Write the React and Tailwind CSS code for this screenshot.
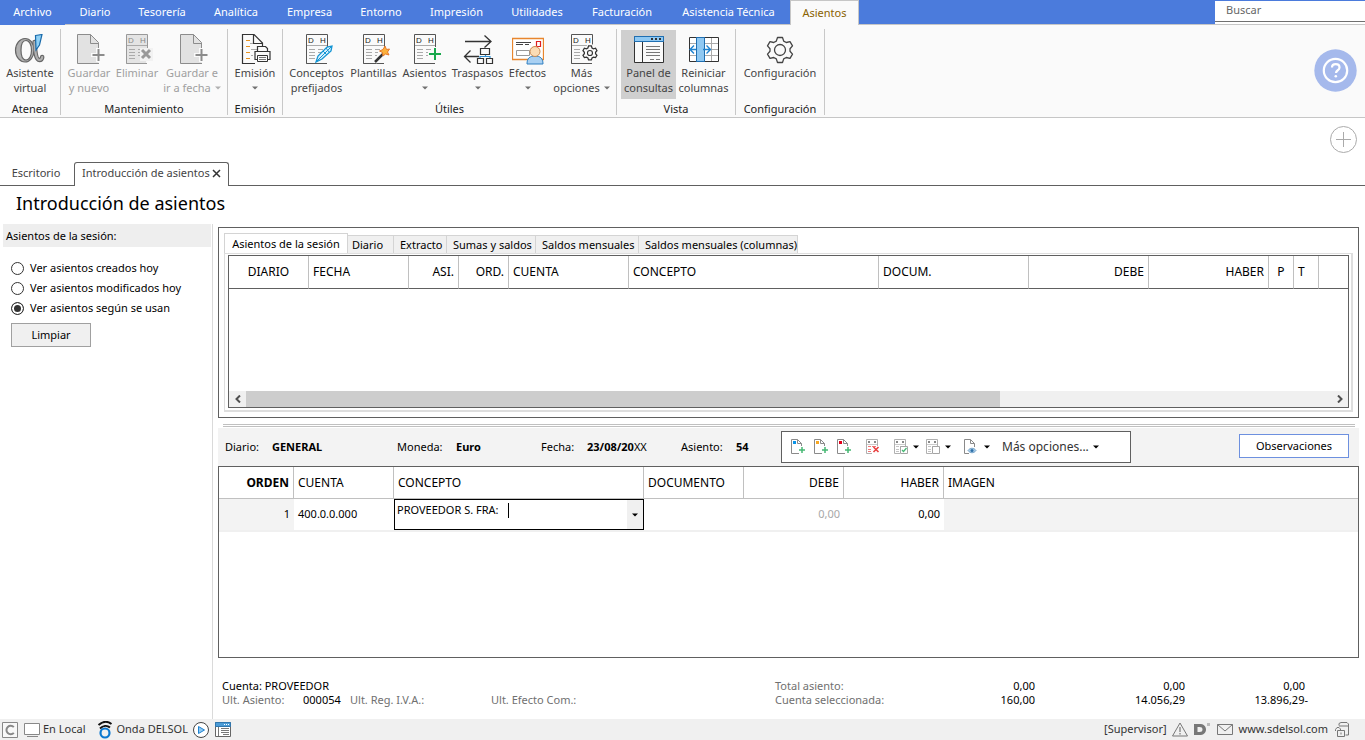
import React from "react";

const MENU = [
  ["Archivo", "w-[65px]"],
  ["Diario", "w-[60px]"],
  ["Tesorería", "w-[74px]"],
  ["Analítica", "w-[74px]"],
  ["Empresa", "w-[73px]"],
  ["Entorno", "w-[70px]"],
  ["Impresión", "w-[81px]"],
  ["Utilidades", "w-[80px]"],
  ["Facturación", "w-[90px]"],
  ["Asistencia Técnica", "w-[123px]"],
];

function Caret({ className = "text-[#707070]" }) {
  return (
    <svg width="6" height="4" viewBox="0 0 6 4" className={`inline-block shrink-0 ${className}`} aria-hidden="true">
      <path d="M0 0.5h6L3 3.5z" fill="currentColor" />
    </svg>
  );
}

function Svg({ w = 32, h = 32, children }) {
  return (
    <svg width={w} height={h} viewBox={`0 0 ${w} ${h}`} fill="none" className="shrink-0" aria-hidden="true">
      {children}
    </svg>
  );
}

/* Ledger page with the D / H column heads, shared by several ribbon icons */
function Ledger({ stroke = "#555", fill = "none", ink = "#222" }) {
  return (
    <>
      <path d="M26.5 14V0.5H5.500V29.500H25" fill={fill} stroke={stroke} />
      <path d="M26 29.500H5.500" stroke={stroke} />
      <text x="7" y="9" fontSize="8" fill={ink} className="font-['Liberation_Sans',sans-serif]">D</text>
      <text x="19" y="9" fontSize="8" fill={ink} className="font-['Liberation_Sans',sans-serif]">H</text>
      <path d="M6 11.500h20" stroke="#aaa" />
      <path d="M8 15.500h6M8 18.500h6M8 21.500h6M8 24.500h6M17 15.500h5M17 18.500h3M17 21.500h2" stroke="#aaa" />
    </>
  );
}

function AlphaIcon() {
  return (
    <Svg>
      <path d="M20.500 8C21 15 21.500 26 25.500 26C27 26 28 25 28.200 23" stroke="#666" strokeWidth="4.500" strokeLinecap="round" />
      <path
        fillRule="evenodd"
        d="M11 4.500C16 4.500 20 9 20 16S16 28 11 28S1.500 23 1.500 16.200S6 4.500 11 4.500zM12 6.500C8.500 6.500 7 10.500 7 16.200S8.500 26 12 26S17.500 21.500 17.500 16.200S15.500 6.500 12 6.500z"
        fill="#b0b0b0"
        stroke="#666"
        strokeWidth="1.200"
      />
      <path d="M20.500 8C21 15 21.500 26 25.500 26C27 26 28 25 28.200 23" stroke="#b0b0b0" strokeWidth="2.200" strokeLinecap="round" />
      <path d="M21.500 1.500l6.500-1L25.500 11l-3.500 5z" fill="#8fd0f5" stroke="#1a6bab" strokeWidth="1.200" />
    </Svg>
  );
}

function SavePlusIcon() {
  return (
    <Svg>
      <path d="M4.500 0.500H17.500L25.500 8.500V29.500H4.500z" fill="#e2e2e2" />
      <path d="M25.500 16V8.500L17.500 0.500H4.500V29.500H26M17.500 0.500V9.500H25.500" stroke="#8c8c8c" />
      <path d="M25 14v14M18 21h14" stroke="#fafafa" strokeWidth="4" />
      <path d="M25.500 15v12M19.500 21h12" stroke="#8c8c8c" strokeWidth="2" />
    </Svg>
  );
}

function DeleteIcon() {
  return (
    <Svg>
      <Ledger stroke="#999" fill="#e4e4e4" ink="#888" />
      <path d="M19 14h14v13H19z" fill="#f2f2f2" />
      <path d="M21 16l8 8M29 16l-8 8" stroke="#999" strokeWidth="3" />
    </Svg>
  );
}

function PrintIcon() {
  return (
    <Svg>
      <path d="M23.500 12V9L15 0.500H3.500V29.500H16M14.500 0.500V9.500H23.500" stroke="#333" strokeWidth="1.200" />
      <path d="M7 6.500h4M7 12.500h4M7 18.500h4M7 24.500h4" stroke="#e8921f" />
      <path d="M11 9.500h3M12 15.500h8M12 21.500h2" stroke="#aaa" />
      <path d="M18.500 17.500v-5h8l2 2v3" fill="#fafafa" stroke="#333" strokeWidth="1.200" />
      <path d="M16 17.500h15v8H16z" fill="#fafafa" stroke="#333" strokeWidth="1.200" />
      <path d="M18.500 21.500h10v6h-10z" fill="#fafafa" stroke="#333" />
      <path d="M20 23.500h7M20 25.500h7" stroke="#777" />
    </Svg>
  );
}

function PenIcon() {
  return (
    <Svg>
      <Ledger />
      <path d="M15 28l2-6 9-9 5-1-1 5-9 8z" fill="#d9f1fd" stroke="#1495d4" strokeWidth="1.300" />
      <path d="M15 28l10-10 5-5M22 17l4 4M25 14l3 4" stroke="#1495d4" />
    </Svg>
  );
}

function WandIcon() {
  return (
    <Svg>
      <Ledger />
      <path d="M17 28L27 18" stroke="#fafafa" strokeWidth="4" />
      <path d="M17 28L26 19" stroke="#333" strokeWidth="2.500" />
      <path d="M27 12l1.500 3.500 3-.5-2 3 1.500 3-3.500-1-2.500 2-.5-3.500-3-1.500 3.500-1.500z" fill="#fbb13c" stroke="#e8792a" />
    </Svg>
  );
}

function AddEntryIcon() {
  return (
    <Svg>
      <Ledger />
      <path d="M26 13v14M19 20h14" stroke="#fafafa" strokeWidth="4" />
      <path d="M26 14v12M20 20h12" stroke="#18a84c" strokeWidth="2" />
    </Svg>
  );
}

function TransferIcon() {
  return (
    <Svg>
      <path d="M3 7.500H29M22.500 1.500l6.500 6-6.500 6M17 22.500H2.500M8.500 16.500l-6 6 6 6" stroke="#333" strokeWidth="1.300" />
      <path d="M18.500 14.500h9v6h-9zM15.500 24.500h6v5h-6zM24.500 24.500h6v5h-6z" fill="#fafafa" stroke="#333" strokeWidth="1.200" />
      <path d="M18 24v-1.500h10V24M23.500 21v1.500" stroke="#2f8fd3" strokeWidth="1.200" />
    </Svg>
  );
}

function BillsIcon() {
  return (
    <Svg>
      <path d="M0.500 4.500H31.500V25.500H0.500z" fill="#fff" stroke="#e8862e" strokeWidth="1.300" />
      <path d="M4 8.500h15M4 10.500h7M13 10.500h4" stroke="#444" />
      <path d="M4.500 16.500h13v5h-13z" stroke="#999" />
      <path d="M24.500 7.500h4v5h-4z" stroke="#e02020" strokeWidth="1.200" />
      <path d="M15 30c0-6 3-8 8-8s8 2 8 8z" fill="#a9d0f2" stroke="#2f7fc0" />
      <circle cx="23" cy="17.500" r="5" fill="#fbdcb5" stroke="#c98a52" />
    </Svg>
  );
}

const gearPath =
  "M13.500 3.500h5l1.200 3.600 2.600 1.400 3.700-.9 2.500 4.300-2.500 2.800v2.600l2.500 2.800-2.500 4.300-3.700-.9-2.600 1.400-1.200 3.600h-5l-1.200-3.600-2.600-1.400-3.700.9-2.500-4.300 2.500-2.800v-2.600l-2.500-2.800 2.500-4.300 3.700.9 2.600-1.400z";

function MoreIcon() {
  return (
    <Svg>
      <Ledger />
      <g transform="translate(15 10) scale(0.56)">
        <path d={gearPath} fill="#fafafa" stroke="#fafafa" strokeWidth="6" />
        <path d={gearPath} fill="#fafafa" stroke="#333" strokeWidth="2.200" />
        <circle cx="16" cy="16" r="4.500" stroke="#333" strokeWidth="2" />
      </g>
    </Svg>
  );
}

function PanelIcon() {
  return (
    <Svg>
      <path d="M1.500 2.500H30.500V28.500H1.500z" fill="#fafafa" stroke="#333" />
      <path d="M1.500 2.500H30.500V7.500H1.500z" fill="#8fc8f2" stroke="#1f6fb2" />
      <path d="M18 4h2v2h-2zM22 4h2v2h-2zM26 4h2v2h-2z" fill="#333" />
      <path d="M9.500 8V28" stroke="#333" />
      <path d="M13 12.500h14M13 15.500h14M13 18.500h14M13 21.500h14M17 25.500h4M23 25.500h4" stroke="#777" />
    </Svg>
  );
}

function ColumnsIcon() {
  return (
    <Svg>
      <path d="M1.500 3.500H30.500V27.500H1.500z" fill="#fff" stroke="#333" />
      <path d="M2 9.500H30M2 15.500H30M2 21.500H30M23.500 4V27" stroke="#aaa" />
      <path d="M8.500 3.500h8v24h-8z" fill="#8fc8f2" stroke="#1f6fb2" />
      <path d="M8 15.500H2.500M6 11.500l-4 4 4 4M15 15.500h7M18.500 11.500l4 4-4 4" stroke="#1f82cf" strokeWidth="1.400" />
    </Svg>
  );
}

function GearIcon() {
  return (
    <Svg>
      <path d={gearPath} stroke="#444" strokeWidth="1.300" strokeLinejoin="round" />
      <circle cx="16" cy="16" r="5.500" stroke="#444" strokeWidth="1.300" />
    </Svg>
  );
}

function RibbonButton({ icon, l1, l2, caret, width, disabled, active }) {
  return (
    <button
      type="button"
      disabled={disabled}
      className={`mt-px flex h-[69px] shrink-0 flex-col items-center pt-1 text-[11px] leading-[15px] whitespace-nowrap ${width} ${
        active ? "bg-[#cfcfcf]" : ""
      } ${disabled ? "text-[#a0a0a0]" : "text-[#444]"}`}
    >
      <span className="h-[31px]">{icon}</span>
      <span>{l1}</span>
      <span className="flex h-[15px] items-center gap-1">
        {l2}
        {caret && <Caret className={disabled ? "text-[#b0b0b0]" : "text-[#707070]"} />}
      </span>
    </button>
  );
}

function Group({ label, width, children }) {
  return (
    <section className={`mt-1 flex h-[86px] shrink-0 flex-col justify-between border-r border-[#c8c8c8] ${width}`}>
      <div className="flex justify-center">{children}</div>
      <div className="text-center text-[11px] leading-3 text-[#222]">{label}</div>
    </section>
  );
}

function Ribbon() {
  return (
    <div className="flex h-[93px] items-start border-b border-[#c6c6c6] bg-[#fafafa]">
      <Group label="Atenea" width="w-[61px]">
        <RibbonButton icon={<AlphaIcon />} l1="Asistente" l2="virtual" width="w-[60px]" />
      </Group>
      <Group label="Mantenimiento" width="w-[167px]">
        <RibbonButton icon={<SavePlusIcon />} l1="Guardar" l2="y nuevo" width="w-[48px]" disabled />
        <RibbonButton icon={<DeleteIcon />} l1="Eliminar" width="w-[48px]" disabled />
        <RibbonButton icon={<SavePlusIcon />} l1="Guardar e" l2="ir a fecha" caret width="w-[62px]" disabled />
      </Group>
      <Group label="Emisión" width="w-[55px]">
        <RibbonButton icon={<PrintIcon />} l1="Emisión" caret width="w-[50px]" />
      </Group>
      <Group label="Útiles" width="w-[334px]">
        <RibbonButton icon={<PenIcon />} l1="Conceptos" l2="prefijados" width="w-[62px]" />
        <RibbonButton icon={<WandIcon />} l1="Plantillas" width="w-[52px]" />
        <RibbonButton icon={<AddEntryIcon />} l1="Asientos" caret width="w-[50px]" />
        <RibbonButton icon={<TransferIcon />} l1="Traspasos" caret width="w-[56px]" />
        <RibbonButton icon={<BillsIcon />} l1="Efectos" caret width="w-[44px]" />
        <RibbonButton icon={<MoreIcon />} l1="Más" l2="opciones" caret width="w-[64px]" />
      </Group>
      <Group label="Vista" width="w-[119px]">
        <RibbonButton icon={<PanelIcon />} l1="Panel de" l2="consultas" width="w-[55px]" active />
        <RibbonButton icon={<ColumnsIcon />} l1="Reiniciar" l2="columnas" width="w-[55px]" />
      </Group>
      <Group label="Configuración" width="w-[89px]">
        <RibbonButton icon={<GearIcon />} l1="Configuración" width="w-[84px]" />
      </Group>
      <button type="button" aria-label="Ayuda" className="mt-6 mr-2 ml-auto">
        <Svg w={43} h={43}>
          <circle cx="21.500" cy="21.500" r="21.200" fill="#a5b9ec" />
          <circle cx="21.500" cy="21.500" r="11.700" stroke="#fff" strokeWidth="2.200" />
          <path d="M18 18.500c0-4.500 7.500-4.500 7.500 0 0 3-3.500 2.500-3.500 5.500" stroke="#fff" strokeWidth="2.200" />
          <circle cx="21.800" cy="27.300" r="1.300" fill="#fff" />
        </Svg>
      </button>
    </div>
  );
}

const UPPER = [
  ["DIARIO", "w-[80px]", "text-center"],
  ["FECHA", "w-[100px]", "text-left"],
  ["ASI.", "w-[50px]", "text-right"],
  ["ORD.", "w-[50px]", "text-right"],
  ["CUENTA", "w-[120px]", "text-left"],
  ["CONCEPTO", "w-[250px]", "text-left"],
  ["DOCUM.", "w-[150px]", "text-left"],
  ["DEBE", "w-[120px]", "text-right"],
  ["HABER", "w-[120px]", "text-right"],
  ["P", "w-[25px]", "text-center"],
  ["T", "w-[25px]", "text-left"],
];

const TABS = [
  ["Diario", "w-[46px] pl-1"],
  ["Extracto", "w-[53px] pl-1.5"],
  ["Sumas y saldos", "w-[89px] pl-1.5"],
  ["Saldos mensuales", "w-[103px] pl-1.5"],
  ["Saldos mensuales (columnas)", "w-[159px] pl-1.5"],
];

function UpperPanel() {
  return (
    <section className="flex h-[191px] flex-col border border-[#606060] px-[5px] pt-[5px] pb-[5px]">
      <div className="flex h-5 items-end text-[11px]" role="tablist">
        <button type="button" role="tab" aria-selected="true" className="h-5 w-[124px] border border-b-0 border-[#d4d4d4] bg-white text-center leading-[18px] whitespace-nowrap">
          Asientos de la sesión
        </button>
        {TABS.map(([t, c]) => (
          <button key={t} type="button" role="tab" aria-selected="false" className={`h-[18px] border-t border-r border-[#d4d4d4] bg-[#f0f0f0] text-left leading-[17px] whitespace-nowrap ${c}`}>
            {t}
          </button>
        ))}
      </div>
      <div className="flex flex-1 flex-col border border-r-2 border-b-2 border-[#dedede] pt-px pr-0.5 pb-0.5 pl-[3px]">
        <div className="flex flex-1 flex-col border border-[#606060]">
          <table className="w-full table-fixed border-separate border-spacing-0 text-[12px]">
            <thead>
              <tr className="h-[33px]">
                {UPPER.map(([t, w, a]) => (
                  <th key={t} scope="col" className={`border-r border-b border-r-[#c0c0c0] border-b-[#606060] px-1 font-normal ${w} ${a}`}>{t}</th>
                ))}
                <td className="border-b border-[#606060]"></td>
              </tr>
            </thead>
          </table>
          <div className="flex-1" />
          <div className="flex h-4 bg-[#f0f0f0]">
            <button type="button" aria-label="Desplazar a la izquierda" className="flex w-[17px] items-center justify-center">
              <Svg w={8} h={8}><path d="M6 0.500L2.500 4L6 7.500" stroke="#505050" strokeWidth="2" /></Svg>
            </button>
            <div className="flex-1"><div className="h-4 w-[754px] max-w-full bg-[#cdcdcd]" /></div>
            <button type="button" aria-label="Desplazar a la derecha" className="flex w-[17px] items-center justify-center">
              <Svg w={8} h={8}><path d="M2 0.500L5.500 4L2 7.500" stroke="#505050" strokeWidth="2" /></Svg>
            </button>
          </div>
        </div>
      </div>
    </section>
  );
}

function MiniDoc({ color }) {
  return (
    <Svg w={16} h={16}>
      <path d="M11.500 7V4.500L7.500 0.500H1.500V14.500H9M7.500 0.500V4.500H11.500" stroke="#8a8a8a" />
      <path d="M3 2h3v3H3z" fill={color} />
      <path d="M12 8v6M9 11h6" stroke="#45b873" strokeWidth="1.500" />
    </Svg>
  );
}

function MiniGrid({ line = "#c4c4c4", children }) {
  return (
    <Svg w={16} h={16}>
      <path d="M12.500 7V0.500H1.500V14.500H7" stroke="#b0b0b0" />
      <path d="M3 2h2v2H3zM9 2h2v2H9z" fill="#888" />
      <path d="M2 5.500h10" stroke="#ccc" />
      <path d="M3 7.500h3M7 7.500h4M3 10.500h3M3 12.500h3" stroke={line} />
      {children}
    </Svg>
  );
}

function EntryBar() {
  return (
    <div className="flex h-[38px] items-center bg-[#f3f3f3] pl-[7px] text-[11px] whitespace-nowrap">
      <span className="w-[47px]">Diario:</span>
      <b className="w-[125px]">GENERAL</b>
      <span className="w-[59px]">Moneda:</span>
      <b className="w-[85px]">Euro</b>
      <span className="w-[46px]">Fecha:</span>
      <span className="w-[94px]"><b>23/08/20</b>XX</span>
      <span className="w-[55px]">Asiento:</span>
      <b className="w-[45px]">54</b>
      <div className="flex h-8 w-[350px] items-center border border-[#606060] bg-white pl-2">
        <button type="button" aria-label="Nuevo apunte" className="w-[23px]"><MiniDoc color="#0a94e8" /></button>
        <button type="button" aria-label="Insertar apunte" className="w-[23px]"><MiniDoc color="#f7a823" /></button>
        <button type="button" aria-label="Duplicar apunte" className="w-[29px]"><MiniDoc color="#e2001a" /></button>
        <button type="button" aria-label="Borrar apunte" className="w-[28px]">
          <MiniGrid line="#f07878"><path d="M8.500 8l5 5M13.500 8l-5 5" stroke="#e84040" strokeWidth="1.600" /></MiniGrid>
        </button>
        <button type="button" aria-label="Marcar" className="flex w-8 items-center gap-1">
          <MiniGrid><path d="M7.500 7.500h7v7h-7z" fill="#fff" stroke="#a5a5a5" /><path d="M9 11l1.500 1.500L13.500 9" stroke="#45b873" strokeWidth="1.300" /></MiniGrid>
          <Caret className="text-black" />
        </button>
        <button type="button" aria-label="Desmarcar" className="flex w-[37px] items-center gap-1">
          <MiniGrid><path d="M7.500 7.500h7v7h-7z" fill="#fff" stroke="#a5a5a5" /></MiniGrid>
          <Caret className="text-black" />
        </button>
        <button type="button" aria-label="Ver documento" className="flex w-10 items-center gap-1.5">
          <Svg w={16} h={16}>
            <path d="M12.500 8V4.500L8.500 0.500H2.500V14.500H7M8.500 0.500V4.500H12.500" stroke="#8a8a8a" />
            <path d="M6 11.500c2-3 6-3 8 0-2 3-6 3-8 0z" fill="#a9cde8" stroke="#7aa7cc" />
            <circle cx="10" cy="11.500" r="1.500" fill="#2c6fa8" />
          </Svg>
          <Caret className="text-black" />
        </button>
        <button type="button" className="flex items-center gap-1 text-[12px] text-[#333]">
          Más opciones... <Caret className="text-black" />
        </button>
      </div>
      <button type="button" className="mr-[10px] mb-0.5 ml-auto h-6 w-[110px] border border-[#6d90df] bg-white">Observaciones</button>
    </div>
  );
}

function EntryTable() {
  const th = "border-r border-b border-[#c0c0c0] px-1";
  const td = "border-b-2 border-[#f0f0f0] px-1";
  return (
    <div className="h-48 border border-[#606060]">
      <table className="w-full table-fixed border-separate border-spacing-0 text-[12px]">
        <thead>
          <tr className="h-8">
            <th scope="col" className={`${th} w-[75px] text-right font-bold`}>ORDEN</th>
            <th scope="col" className={`${th} w-[100px] text-left font-normal`}>CUENTA</th>
            <th scope="col" className={`${th} w-[250px] text-left font-normal`}>CONCEPTO</th>
            <th scope="col" className={`${th} w-[100px] text-left font-normal`}>DOCUMENTO</th>
            <th scope="col" className={`${th} w-[100px] text-right font-normal`}>DEBE</th>
            <th scope="col" className={`${th} w-[100px] text-right font-normal`}>HABER</th>
            <th scope="col" className="border-b border-[#c0c0c0] px-1 text-left font-normal">IMAGEN</th>
          </tr>
        </thead>
        <tbody>
          <tr className="h-[33px] text-[11px]">
            <td className={`${td} bg-[#f3f3f3] text-right`}>1</td>
            <td className={td}>400.0.0.000</td>
            <td className="border-b-2 border-[#f0f0f0] p-0">
              <div className="flex h-[31px] border border-black">
                <div className="flex h-5 min-w-0 flex-1 items-center pl-0.5">
                  <input type="text" aria-label="Concepto" defaultValue="PROVEEDOR S. FRA:" className="w-[111px] text-[11px] outline-none" />
                  <span className="h-[15px] w-px bg-black" aria-hidden="true" />
                </div>
                <button type="button" aria-label="Elegir concepto" className="flex w-4 items-center justify-center bg-[#f0f0f0]">
                  <Caret className="text-black" />
                </button>
              </div>
            </td>
            <td className={td}></td>
            <td className={`${td} text-right text-[#a8a8a8]`}>0,00</td>
            <td className={`${td} text-right`}>0,00</td>
            <td className={`${td} bg-[#f3f3f3]`}></td>
          </tr>
        </tbody>
      </table>
    </div>
  );
}

function Totals() {
  return (
    <div className="mt-[21px] flex h-9 pl-1 text-[11px] leading-[14px] whitespace-nowrap text-[#707070]">
      <div className="w-[553px]">
        <div className="text-black">Cuenta: PROVEEDOR</div>
        <div className="flex">
          <span className="w-[81px]">Ult. Asiento:</span>
          <span className="w-[47px] text-black">000054</span>
          <span className="w-[141px]">Ult. Reg. I.V.A.:</span>
          <span>Ult. Efecto Com.:</span>
        </div>
      </div>
      <div className="w-[160px]">
        <div>Total asiento:</div>
        <div>Cuenta seleccionada:</div>
      </div>
      <div className="w-[100px] text-right text-black"><div>0,00</div><div>160,00</div></div>
      <div className="w-[150px] text-right text-black"><div>0,00</div><div>14.056,29</div></div>
      <div className="w-[123px] text-right text-black"><div className="pr-[3px]">0,00</div><div>13.896,29-</div></div>
    </div>
  );
}

function StatusBar() {
  return (
    <footer className="flex h-[21px] items-center bg-[#f0f0f0] pl-0.5 text-[11px] whitespace-nowrap text-[#333]">
      <Svg w={16} h={16}>
        <path d="M0.500 0.500h15v15H0.500z" fill="#f8f8f8" stroke="#888" />
        <path d="M11.800 5.200a4.200 4.200 0 1 0 0 5.600" stroke="#888" strokeWidth="2" />
      </Svg>
      <div className="ml-1.5 flex items-center gap-[3px]">
        <Svg w={16} h={16}><path d="M0.500 1.500h15v11H0.500z" fill="#fff" stroke="#888" /><path d="M3 14.500h11" stroke="#888" /></Svg>
        En Local
      </div>
      <div className="ml-3 flex items-center gap-[3px]">
        <Svg w={16} h={18}>
          <path d="M1.500 4c4-3.500 9-4 13-1M3 7.500c3-3 7-3.500 10-1" stroke="#111" strokeWidth="2" />
          <circle cx="8" cy="12" r="4.500" stroke="#0b78d0" strokeWidth="2.200" />
        </Svg>
        Onda DELSOL
      </div>
      <button type="button" aria-label="Reproducir" className="ml-[5px]">
        <Svg w={16} h={16}><circle cx="8" cy="8" r="7.500" fill="#fff" stroke="#444" /><path d="M5.500 4.500v7l6-3.500z" fill="#8fc8f2" stroke="#1f82cf" /></Svg>
      </button>
      <button type="button" aria-label="Panel" className="ml-1.5">
        <Svg w={16} h={15}>
          <path d="M0.500 0.500h15v14H0.500z" fill="#fff" stroke="#666" />
          <path d="M0.500 0.500h15v4H0.500z" fill="#4b9bd6" stroke="#2f76ae" />
          <path d="M9 2h1v1H9zM11 2h1v1h-1zM13 2h1v1h-1z" fill="#fff" />
          <path d="M3.500 5v9M6 6.500h8M6 8.500h8M6 10.500h8M8 12.500h6" stroke="#777" />
        </Svg>
      </button>
      <div className="mr-[15px] ml-auto flex items-center">
        <span>[Supervisor]</span>
        <span className="ml-[5px] flex gap-1.5">
          <Svg w={16} h={15}><path d="M8 1L15.500 14H0.500z" stroke="#777" /><path d="M8 5v5M8 11v1.500" stroke="#777" strokeWidth="1.200" /></Svg>
          <Svg w={17} h={15}>
            <path fillRule="evenodd" d="M0 2h5.500c4 0 6.500 2 6.500 5.500S9.500 13 5.500 13H0zM3.500 5v5H5.500c2 0 3-.8 3-2.500S7.500 5 5.500 5z" fill="#777" />
            <path d="M13 1h3v3h-3z" fill="#bbb" />
          </Svg>
          <Svg w={16} h={15}><path d="M0.500 2.500h15v10H0.500zM0.500 2.500L8 9l7.500-6.500" stroke="#777" /></Svg>
        </span>
        <a href="https://www.sdelsol.com" className="mx-1.5">www.sdelsol.com</a>
        <Svg w={16} h={16}>
          <path d="M5 3.500V1.500L7 0.500h6L14.500 2v11h-3M5 4h9" stroke="#777" />
          <path d="M3.500 8.500h7v6h-7zM1.500 9V7.500l1.500-2h2L6.500 7v1.500M7 10.500v2" stroke="#777" />
        </Svg>
      </div>
    </footer>
  );
}

const RADIOS = ["Ver asientos creados hoy", "Ver asientos modificados hoy", "Ver asientos según se usan"];

export default function App() {
  return (
    <div className="flex min-h-screen flex-col overflow-x-hidden bg-white font-['Noto_Sans','Open_Sans',sans-serif] text-black">
      <header>
        <nav className="flex h-[25px] bg-[#4b7bdc] text-[11px] text-white">
          {MENU.map(([t, w], i) => (
            <button key={t} type="button" className={`h-[25px] shrink-0 whitespace-nowrap ${w} ${i ? "border-b border-[#c6c6c6]" : ""}`}>
              {t}
            </button>
          ))}
          <button type="button" className="h-[25px] w-[69px] shrink-0 border border-b-0 border-[#c6c6c6] bg-[#fafafa] text-[#8a6200]">
            Asientos
          </button>
          <div className="flex-1 border-b border-[#c6c6c6]" />
          <div className="w-[150px] border-b border-[#c6c6c6] bg-white">
            <div className="h-px bg-[#4b7bdc]" />
            <input type="text" aria-label="Buscar" placeholder="Buscar" className="block h-[21px] w-full border-b border-[#707070] bg-white pb-1 pl-[11px] text-[11px] outline-none placeholder:text-[#666]" />
          </div>
        </nav>
        <Ribbon />
      </header>
      <div className="flex h-11 shrink-0 items-center justify-end pr-2 pb-0.5">
        <button type="button" aria-label="Añadir">
          <Svg w={27} h={27}><circle cx="13.500" cy="13.500" r="13" stroke="#aaa" /><path d="M13.500 6v15M6 13.500h15" stroke="#aaa" /></Svg>
        </button>
      </div>
      <div className="flex h-6 shrink-0 text-[11px] text-[#444]" role="tablist">
        <button type="button" role="tab" aria-selected="false" className="w-[74px] border-b border-[#606060] pr-0.5">Escritorio</button>
        <div className="flex w-[155px] items-center gap-0.5 rounded-t-[3px] border border-b-0 border-[#606060] pb-0.5 pl-[7px]">
          <button type="button" role="tab" aria-selected="true" className="whitespace-nowrap">Introducción de asientos</button>
          <button type="button" aria-label="Cerrar"><Svg w={9} h={9}><path d="M1 1l7 7M8 1L1 8" stroke="#333" strokeWidth="1.500" /></Svg></button>
        </div>
        <div className="flex-1 border-b border-[#606060]" />
      </div>
      <h1 className="h-[38px] shrink-0 pl-4 text-[18px] leading-[34px]">Introducción de asientos</h1>
      <div className="flex flex-1">
        <aside className="w-[213px] shrink-0 border-r border-[#dadada] pr-px pl-[3px] text-[11px]">
          <h2 className="h-[23px] bg-[#eee] pl-[3px] leading-[23px]">Asientos de la sesión:</h2>
          <fieldset className="mt-[11px] pl-2">
            {RADIOS.map((t, i) => (
              <label key={t} className="flex h-5 items-center gap-1.5">
                <input
                  type="radio"
                  name="vista"
                  defaultChecked={i === 2}
                  className="h-[13px] w-[13px] appearance-none rounded-full border border-[#333] bg-white checked:bg-[#333] checked:shadow-[inset_0_0_0_2px_#fff]"
                />
                {t}
              </label>
            ))}
          </fieldset>
          <button type="button" className="mt-[5px] ml-2 h-6 w-20 border border-[#a0a0a0] bg-[#f0f0f0]">Limpiar</button>
        </aside>
        <main className="min-w-0 flex-1 pt-[3px] pr-1.5 pl-[5px]">
          <UpperPanel />
          <div className="mt-1.5 mr-1 mb-px ml-[5px] h-[3px] border-y border-[#c0c0c0]" />
          <EntryBar />
          <EntryTable />
          <Totals />
        </main>
      </div>
      <StatusBar />
    </div>
  );
}
